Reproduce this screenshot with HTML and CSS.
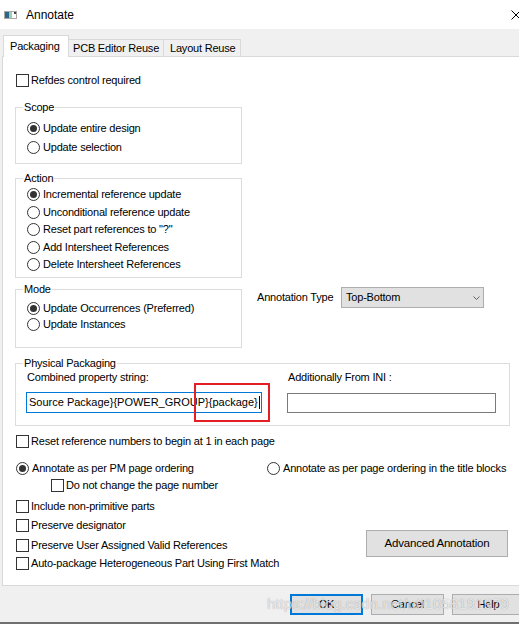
FILE: index.html
```html
<!DOCTYPE html>
<html>
<head>
<meta charset="utf-8">
<title>Annotate</title>
<link rel="stylesheet" href="styles.css">
</head>
<body>
<div class="window">
  <div class="titlebar">
    <svg class="app-icon" viewBox="0 0 13 8" width="13" height="8">
      <rect x="0.5" y="0.5" width="12" height="7" fill="#ffffff" stroke="#a9a9a9"/>
      <rect x="1" y="1" width="4" height="6" fill="#2d6688"/>
      <rect x="5" y="1" width="3" height="6" fill="#9cd0b2"/>
      <rect x="10" y="1" width="2" height="2" fill="#444"/>
    </svg>
    <span class="title">Annotate</span>
    <svg class="close" viewBox="0 0 10 10" width="10" height="10">
      <path d="M0.5 0.5 L9.5 9.5 M9.5 0.5 L0.5 9.5" stroke="#000" stroke-width="1" fill="none"/>
    </svg>
  </div>

  <div class="tabs">
    <div class="tab active">Packaging</div>
    <div class="tab t2">PCB Editor Reuse</div>
    <div class="tab t3">Layout Reuse</div>
  </div>

  <div class="panel">
    <div class="opt refdes"><span class="cb"></span>Refdes control required</div>

    <div class="group scope">
      <div class="gtitle">Scope</div>
      <div class="opts scope-opts">
        <div class="opt"><span class="rb on"></span>Update entire design</div>
        <div class="opt"><span class="rb"></span>Update selection</div>
      </div>
    </div>

    <div class="group action">
      <div class="gtitle">Action</div>
      <div class="opts action-opts">
        <div class="opt"><span class="rb on"></span>Incremental reference update</div>
        <div class="opt"><span class="rb"></span>Unconditional reference update</div>
        <div class="opt"><span class="rb"></span>Reset part references to &quot;?&quot;</div>
        <div class="opt"><span class="rb"></span>Add Intersheet References</div>
        <div class="opt"><span class="rb"></span>Delete Intersheet References</div>
      </div>
    </div>

    <div class="mode-row">
      <div class="group mode">
        <div class="gtitle">Mode</div>
        <div class="opts mode-opts">
          <div class="opt"><span class="rb on"></span>Update Occurrences (Preferred)</div>
          <div class="opt"><span class="rb"></span>Update Instances</div>
        </div>
      </div>
      <div class="anntype">
        <span class="anntype-label">Annotation Type</span>
        <div class="select">
          <span>Top-Bottom</span>
          <svg class="chev" viewBox="0 0 7 4" width="7" height="4">
            <polyline points="0.5,0.5 3.5,3.5 6.5,0.5" fill="none" stroke="#606060" stroke-width="1"/>
          </svg>
        </div>
      </div>
    </div>

    <div class="group phys">
      <div class="gtitle">Physical Packaging</div>
      <div class="pp-grid">
        <div class="pp-label">Combined property string:</div>
        <div class="pp-label">Additionally From INI :</div>
        <div class="field focused">Source Package}{POWER_GROUP}{package}<span class="caret"></span></div>
        <div class="field plain"></div>
      </div>
      <div class="highlight"></div>
    </div>

    <div class="opt reset"><span class="cb"></span>Reset reference numbers to begin at 1 in each page</div>

    <div class="order-row">
      <div class="opt"><span class="rb on"></span>Annotate as per PM page ordering</div>
      <div class="opt"><span class="rb"></span>Annotate as per page ordering in the title blocks</div>
    </div>
    <div class="opt nochange"><span class="cb"></span>Do not change the page number</div>

    <div class="bottom-block">
      <div class="bottom-opts">
        <div class="opt o1"><span class="cb"></span>Include non-primitive parts</div>
        <div class="opt o2"><span class="cb"></span>Preserve designator</div>
        <div class="opt o3"><span class="cb"></span>Preserve User Assigned Valid References</div>
        <div class="opt o4"><span class="cb"></span>Auto-package Heterogeneous Part Using First Match</div>
      </div>
      <div class="btn adv">Advanced Annotation</div>
    </div>
  </div>

  <div class="footer">
    <div class="btn default">OK</div>
    <div class="btn">Cancel</div>
    <div class="btn">Help</div>
    <div class="watermark">https://blog.csdn.net/u01058191979</div>
  </div>
</div>
</body>
</html>
```

FILE: styles.css
```css
* { box-sizing: border-box; }

html, body {
  margin: 0;
  padding: 0;
  width: 519px;
  height: 624px;
  overflow: hidden;
  background: #f0f0f0;
}

body {
  font-family: "Liberation Sans", Arial, sans-serif;
  font-size: 11px;
  line-height: 13px;
  letter-spacing: -0.2px;
  color: #000;
}

.window {
  width: 530px;
  height: 624px;
  display: flex;
  flex-direction: column;
  background: #f0f0f0;
  border-bottom: 2px solid #707070;
}

/* title bar */
.titlebar {
  flex: none;
  height: 29px;
  background: #fff;
  display: flex;
  align-items: center;
}
.app-icon { margin-left: 4px; flex: none; }
.title { margin-left: 9px; font-size: 12px; line-height: 14px; letter-spacing: 0; }
.close { margin-left: auto; margin-right: 9px; flex: none; }

/* tabs */
.tabs {
  flex: none;
  height: 27px;
  display: flex;
  align-items: flex-end;
  padding-left: 3px;
}
.tab {
  height: 17px;
  border-top: 1px solid #d9d9d9;
  border-right: 1px solid #d9d9d9;
  display: flex;
  align-items: center;
  white-space: nowrap;
}
.tab.active {
  width: 66px;
  height: 22px;
  margin-bottom: -1px;
  padding-left: 6px;
  background: #fff;
  border-left: 1px solid #d9d9d9;
  position: relative;
  z-index: 1;
}
.tab.t2 { width: 95px; padding-left: 4px; }
.tab.t3 { width: 77px; padding-left: 6px; }

/* panel */
.panel {
  flex: none;
  height: 530px;
  margin-left: 2px;
  background: #fff;
  border-top: 1px solid #d9d9d9;
  border-left: 1px solid #d9d9d9;
  border-bottom: 1px solid #d9d9d9;
  padding: 17px 0 0 13px;
}

.opt {
  display: flex;
  align-items: center;
  height: 13px;
  white-space: nowrap;
}
.cb {
  flex: none;
  width: 13px;
  height: 13px;
  border: 1px solid #333;
  background: #fff;
  margin-right: 2px;
}
.rb {
  flex: none;
  width: 13px;
  height: 13px;
  border: 1px solid #333;
  border-radius: 50%;
  background: #fff;
  margin-right: 3px;
  display: flex;
  align-items: center;
  justify-content: center;
}
.rb.on::after {
  content: "";
  width: 7px;
  height: 7px;
  border-radius: 50%;
  background: #333;
}

/* group boxes */
.group {
  border: 1px solid #dcdcdc;
  margin-left: -1px;
}
.gtitle {
  width: max-content;
  height: 13px;
  margin-top: -7px;
  padding: 0 1px;
  background: #fff;
}
.opts { display: flex; flex-direction: column; }

.scope {
  width: 227px;
  margin-top: 20px;
  padding: 0 0 9px 11px;
}
.scope .gtitle, .action .gtitle, .mode .gtitle { margin-left: -4px; }
.scope-opts { margin-top: 8px; gap: 6px; }

.action {
  width: 227px;
  margin-top: 14px;
  padding: 0 0 6px 11px;
}
.action-opts { margin-top: 3px; gap: 4.5px; }

.mode-row {
  display: flex;
  align-items: flex-start;
  margin-top: 11px;
}
.mode {
  flex: none;
  width: 227px;
  padding: 0 0 16px 11px;
}
.mode-opts { margin-top: 6px; gap: 3px; }

.anntype {
  display: flex;
  align-items: center;
  margin-left: 15px;
  margin-top: -2px;
}
.anntype-label { width: 84px; white-space: nowrap; }
.select {
  width: 143px;
  height: 21px;
  background: #e1e1e1;
  border: 1px solid #adadad;
  display: flex;
  align-items: center;
  padding-left: 4px;
}
.chev { margin-left: auto; margin-right: 3px; }

/* physical packaging */
.phys {
  position: relative;
  width: 495px;
  margin-top: 15px;
  padding: 0 13px 12px 10px;
}
.phys .gtitle { margin-left: -3px; }
.pp-grid {
  display: grid;
  grid-template-columns: 236px 209px;
  column-gap: 25px;
  row-gap: 8px;
  margin-top: 1px;
}
.pp-label { height: 13px; white-space: nowrap; padding-left: 1px; }
.field {
  background: #fff;
  display: flex;
  align-items: center;
  white-space: nowrap;
  overflow: hidden;
  padding-left: 2px;
  letter-spacing: 0;
}
.field.focused { height: 21px; border: 1px solid #0078d7; }
.field.plain { height: 20px; margin-top: 1px; border: 1px solid #7a7a7a; }
.caret {
  display: inline-block;
  flex: none;
  width: 1px;
  height: 13px;
  margin-left: 1px;
  background: #000;
}
.highlight {
  position: absolute;
  left: 178px;
  top: 19px;
  width: 76px;
  height: 39px;
  border: 2px solid #e51e25;
}

/* lower options */
.reset { margin-top: 9px; }
.order-row {
  display: grid;
  grid-template-columns: 251px auto;
  margin-top: 14px;
}
.nochange { margin-top: 4px; margin-left: 35px; }

.bottom-block {
  display: flex;
  align-items: flex-start;
  margin-top: 8px;
}
.bottom-opts { width: 350px; flex: none; }
.o2 { margin-top: 6px; }
.o3 { margin-top: 7px; }
.o4 { margin-top: 5px; }

.btn {
  width: 73px;
  height: 21px;
  background: #e1e1e1;
  border: 1px solid #adadad;
  display: flex;
  align-items: center;
  justify-content: center;
  white-space: nowrap;
}
.btn.adv {
  width: 142px;
  height: 27px;
  margin-top: 30px;
  font-size: 11.5px;
}
.btn.default { border: 2px solid #0078d7; }

/* footer */
.footer {
  flex: 1;
  position: relative;
  display: flex;
  justify-content: flex-end;
  align-items: flex-start;
  gap: 8px;
  padding: 8px 5px 0 0;
}
.watermark {
  position: absolute;
  left: 267px;
  top: 9px;
  font-size: 15px;
  line-height: 18px;
  letter-spacing: 0.1px;
  white-space: nowrap;
  color: rgba(255, 255, 255, 0.75);
  text-shadow: 0 0 1px rgba(0, 0, 0, 0.4);
}
```
